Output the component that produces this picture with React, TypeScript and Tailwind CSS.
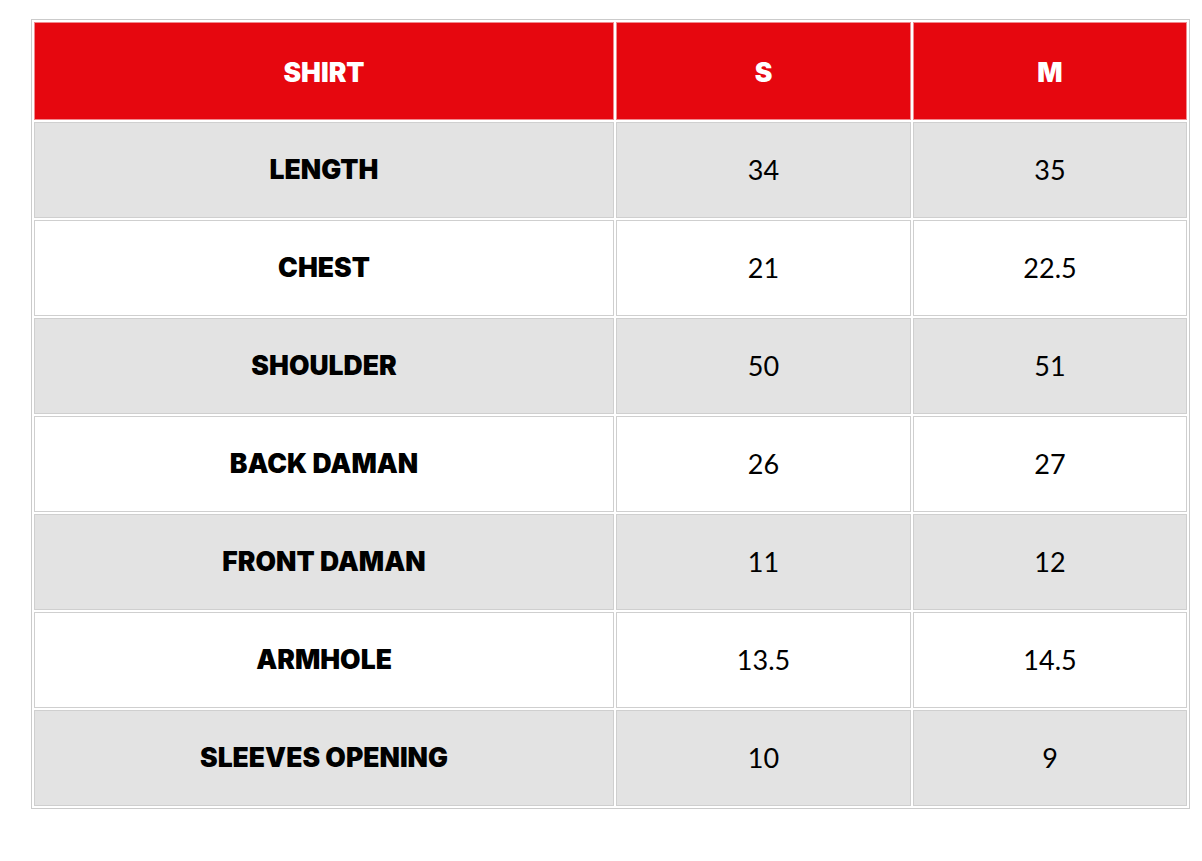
const ROWS: [string, string, string][] = [
  ['LENGTH', '34', '35'],
  ['CHEST', '21', '22.5'],
  ['SHOULDER', '50', '51'],
  ['BACK DAMAN', '26', '27'],
  ['FRONT DAMAN', '11', '12'],
  ['ARMHOLE', '13.5', '14.5'],
  ['SLEEVES OPENING', '10', '9'],
];

export default function App() {
  return (
    <div className="min-h-[861px] bg-white pl-[31px] pt-[19px] font-['Lato',sans-serif] text-black">
      <table className="w-[1159px] table-fixed border-separate border-spacing-[2px] border border-[#cbcbcb] text-[27px]">
        <colgroup>
          <col className="w-[580px]" />
          <col className="w-[295px]" />
          <col />
        </colgroup>
        <thead>
          <tr className="h-[98px]">
            <th className="border border-[#f08a8e] bg-[#e6070f] pt-[3px] font-['Inter',sans-serif] text-[26.5px] font-black text-white">SHIRT</th>
            <th className="border border-[#f08a8e] bg-[#e6070f] pt-[3px] font-['Inter',sans-serif] text-[26.5px] font-black text-white">S</th>
            <th className="border border-[#f08a8e] bg-[#e6070f] pt-[3px] font-['Inter',sans-serif] text-[26.5px] font-black text-white">M</th>
          </tr>
        </thead>
        <tbody>
          {ROWS.map(([label, s, m], i) => {
            const bg = i % 2 === 0 ? 'bg-[#e3e3e3]' : 'bg-white';
            return (
              <tr key={label} className="h-[96px]">
                <td className={`border border-[#cfcfcf] ${bg} text-center font-['Inter',sans-serif] text-[26.5px] font-black`}>{label}</td>
                <td className={`border border-[#cfcfcf] ${bg} text-center`}>{s}</td>
                <td className={`border border-[#cfcfcf] ${bg} text-center`}>{m}</td>
              </tr>
            );
          })}
        </tbody>
      </table>
    </div>
  );
}
